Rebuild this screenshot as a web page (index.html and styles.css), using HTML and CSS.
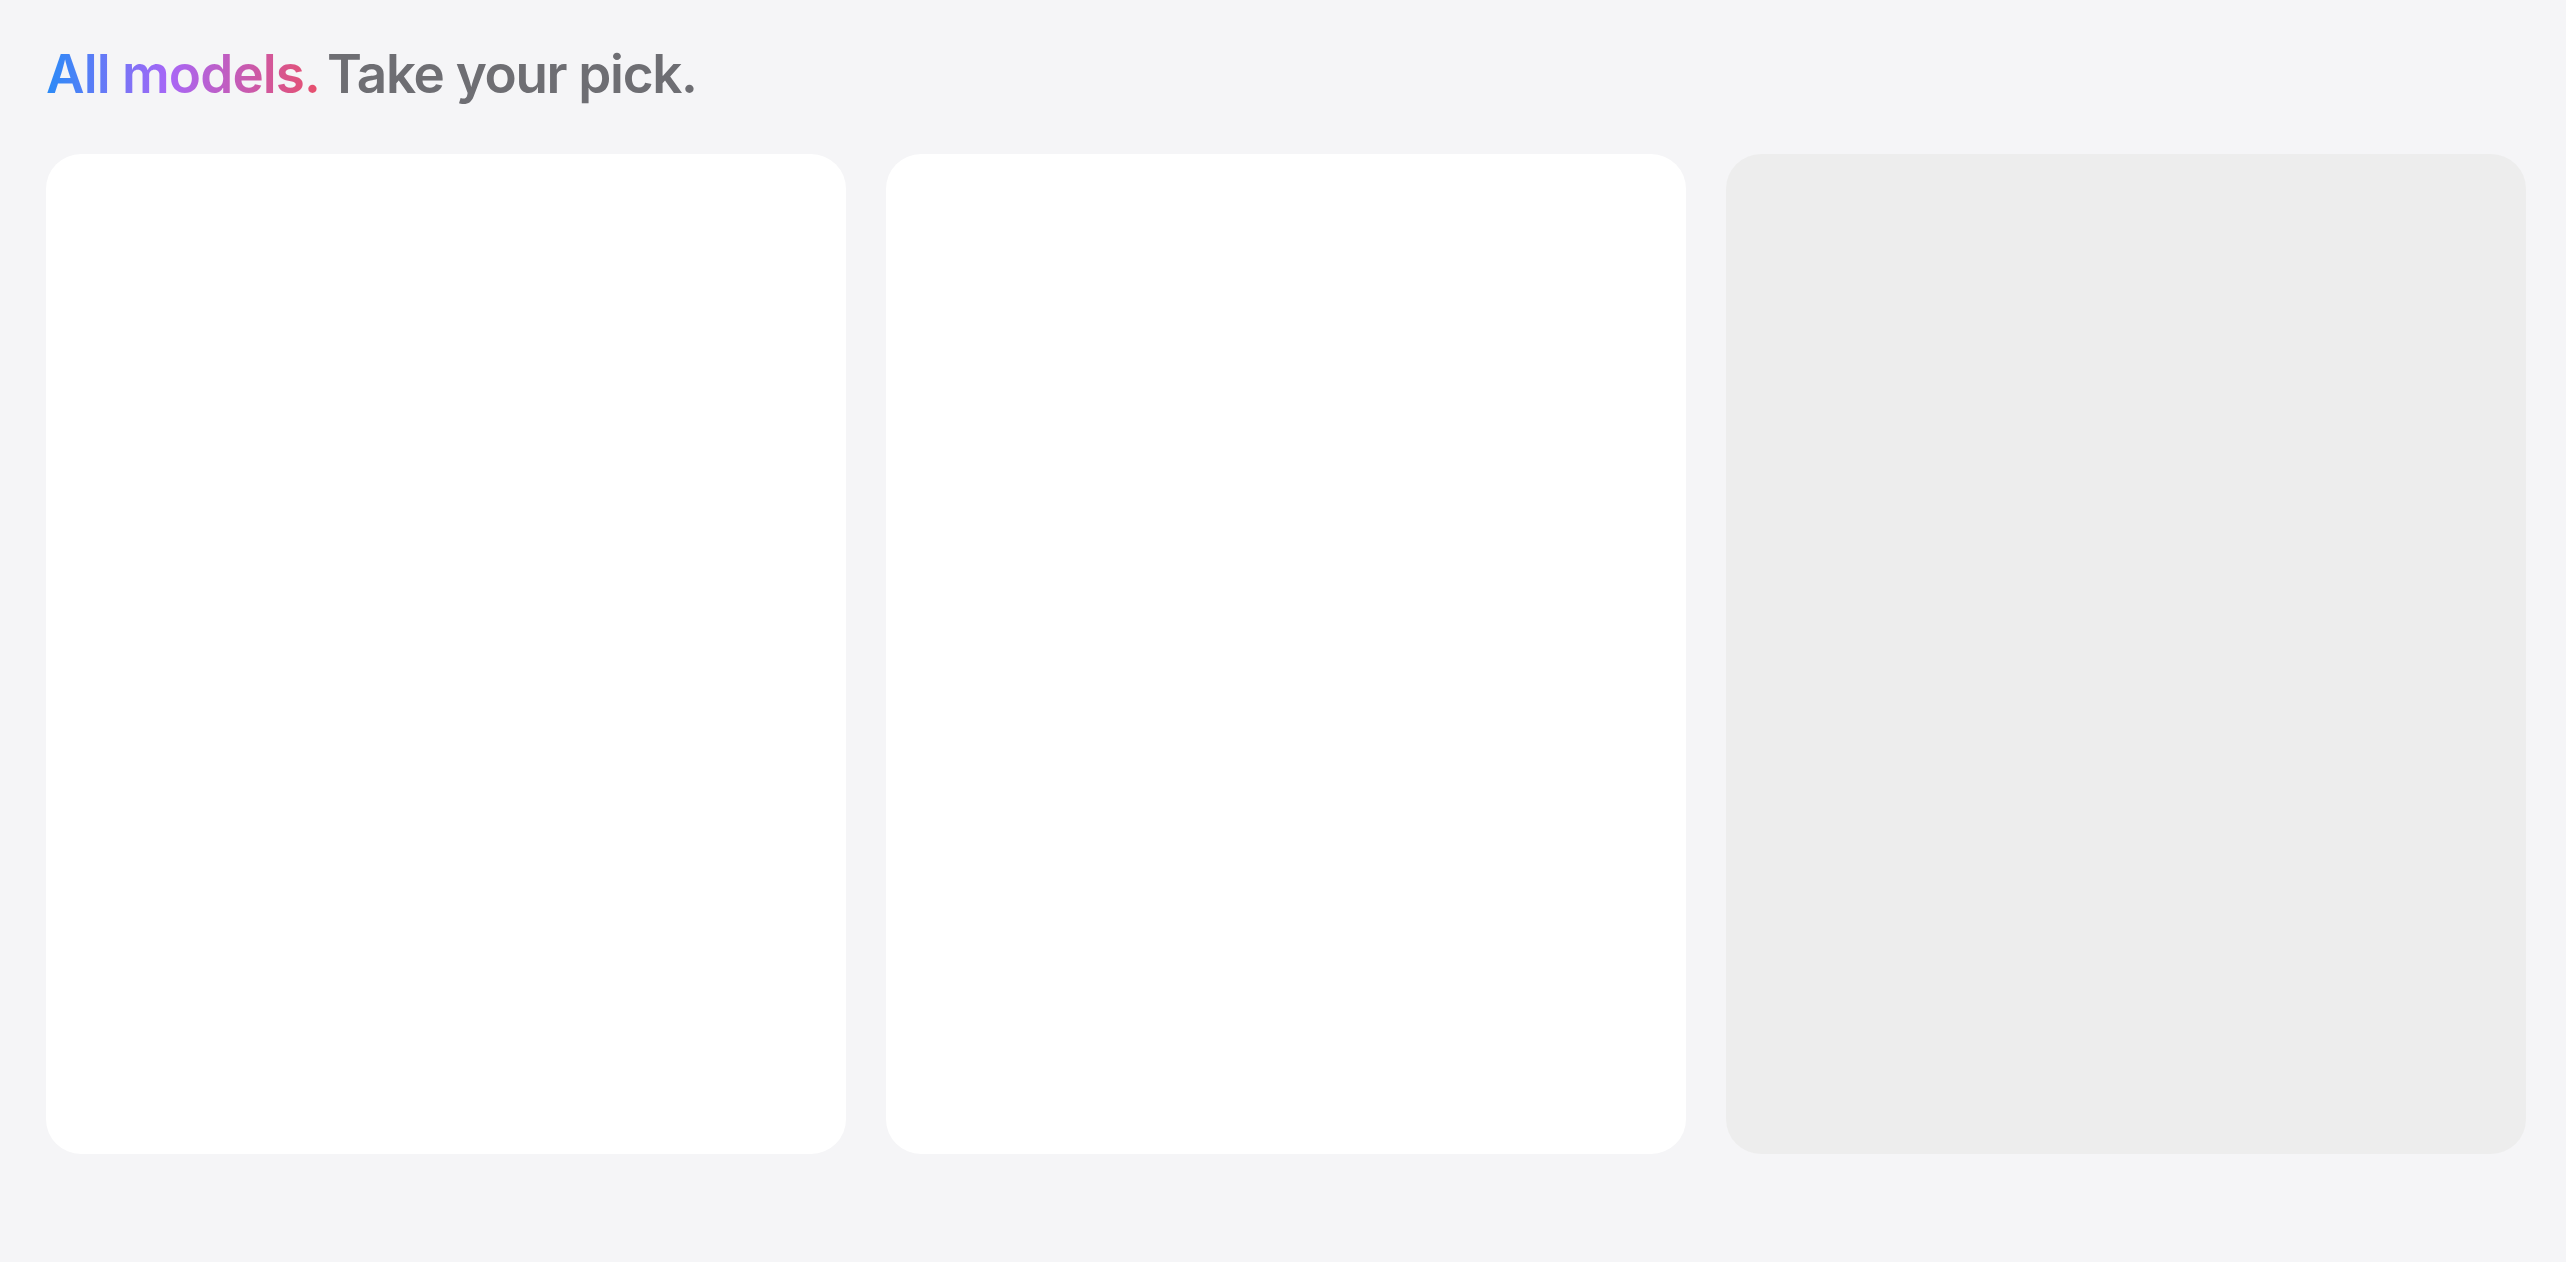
FILE: index.html
```html
<!DOCTYPE html>
<html lang="en">
<head>
<meta charset="utf-8">
<title>All models. Take your pick.</title>
<link rel="stylesheet" href="styles.css">
</head>
<body>
<main class="shelf">
  <h1 class="shelf-title"><span class="shelf-title-accent">All models.</span> Take your pick.</h1>
  <div class="shelf-cards">
    <section class="card"></section>
    <section class="card"></section>
    <section class="card card-loading"></section>
  </div>
</main>
</body>
</html>
```

FILE: styles.css
```css
html, body {
  margin: 0;
  padding: 0;
  background: #f5f5f7;
}

body {
  font-family: Inter, "Noto Sans", "Liberation Sans", sans-serif;
  height: 1262px;
  overflow: hidden;
}

.shelf {
  display: flex;
  flex-direction: column;
  padding: 45px 40px 0 46px;
}

.shelf-title {
  margin: 0 0 51px 0;
  font-size: 53px;
  line-height: 58px;
  font-weight: 600;
  letter-spacing: -0.025em;
  color: #6e6e73;
}

.shelf-title-accent {
  margin-right: -5px;
  letter-spacing: -0.017em;
  background: linear-gradient(90deg, #2a8bf7 0%, #a866f6 45%, #e84f6b 100%);
  -webkit-background-clip: text;
  background-clip: text;
  color: transparent;
}

.shelf-cards {
  display: flex;
  gap: 40px;
}

.card {
  width: 800px;
  height: 1000px;
  flex: 0 0 800px;
  background: #ffffff;
  border-radius: 35px;
}

.card-loading {
  background: #ededed;
}
```
